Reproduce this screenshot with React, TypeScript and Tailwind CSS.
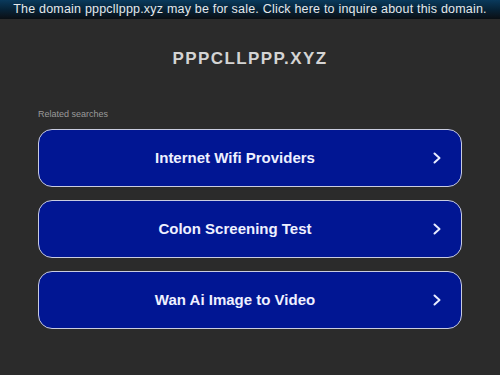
import React from 'react';

const searches = ['Internet Wifi Providers', 'Colon Screening Test', 'Wan Ai Image to Video'];

const Chevron = () => (
  <svg width="12" height="14" viewBox="0 0 12 14" fill="none" className="shrink-0 ml-[20px]">
    <path d="M3.5 2.5 L8.5 7 L3.5 11.5" stroke="#e8ecff" strokeWidth="2" strokeLinecap="round" strokeLinejoin="round" />
  </svg>
);

export default function App() {
  return (
    <div className="min-h-[375px] w-full bg-[#2b2b2b] font-['Liberation_Sans',Arial,sans-serif]">
      <div className="h-[19px] w-full bg-gradient-to-b from-[#0a3a5c] via-[#062338] to-[#0a0f14] flex items-center justify-center overflow-hidden">
        <span className="text-[12.5px] leading-none text-[#e4e8ec] tracking-[0.2px] whitespace-nowrap">
          The domain pppcllppp.xyz may be for sale. Click here to inquire about this domain.
        </span>
      </div>
      <div className="flex flex-col items-center pt-[31px]">
        <h1 className="text-[17px] font-bold tracking-[1.4px] text-[#d4d4d4] leading-none">PPPCLLPPP.XYZ</h1>
      </div>
      <div className="px-[38px] pt-[43px]">
        <div className="text-[9px] text-[#9a9a9a] mb-[10px] leading-none">Related searches</div>
        <div className="flex flex-col gap-[13px]">
          {searches.map((s) => (
            <div
              key={s}
              className="h-[58px] rounded-[14px] border border-[#c9cce0] bg-[#011693] flex items-center pl-[20px] pr-[18px]"
            >
              <span className="flex-1 text-center text-[15px] font-bold text-[#eef0ff]">{s}</span>
              <Chevron />
            </div>
          ))}
        </div>
      </div>
    </div>
  );
}
